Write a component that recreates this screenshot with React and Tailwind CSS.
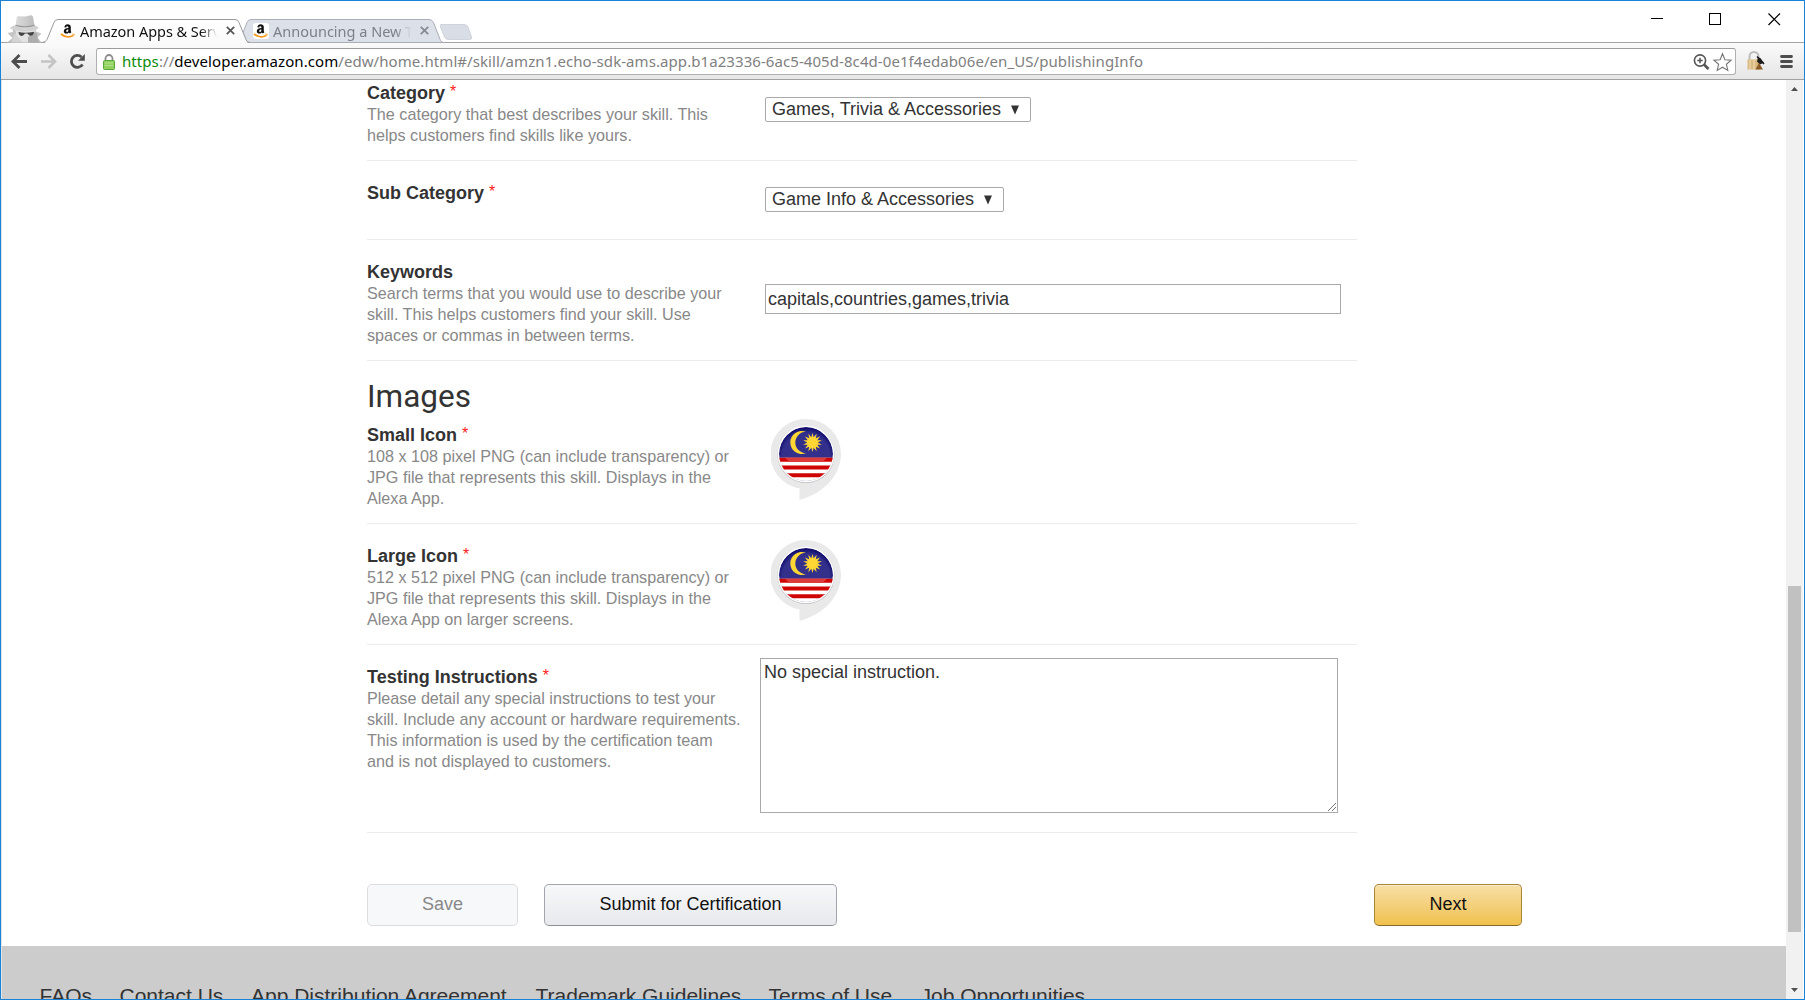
const CHROME = "font-['Noto_Sans','Open_Sans',sans-serif]";

function AmazonIcon() {
  return (
    <svg width="14" height="14" viewBox="0 0 14 14" className="shrink-0 overflow-visible">
      <path d="M3.300 3.200C3.700 1.300 5 .2 6.600.2c1.900 0 3.200.8 3.200 2.800v3.700c0 .7.3 1 .6 1.500L8.900 9.500c-.5-.4-.8-.7-1.100-1.100-.8.8-1.500 1.200-2.500 1.200C3.800 9.600 2.800 8.600 2.800 7.200c0-2.400 2.100-3.100 4.600-3.200 0-.9-.1-1.700-1-1.700-.7 0-1 .4-1.200 1.200zM7.400 5.500c-1.400 0-2.200.5-2.200 1.600 0 .6.3.9.8.9 1.100 0 1.400-1 1.400-2.500z" fill="#111" fillRule="evenodd" />
      <path d="M0 10C3.600 13.300 8.900 13.600 12.300 11.400" fill="none" stroke="#f7981d" strokeWidth="1.700" />
      <path d="M10.600 10c1-.4 2.600-.4 2.900 0 .2.500-.2 2-.9 2.700l.1-2z" fill="#f7981d" />
    </svg>
  );
}

function Close({ color }) {
  return (
    <svg width="9" height="9" viewBox="0 0 9 9" className="shrink-0">
      <path d="M.8.8l7.400 7.400M8.200.8L.8 8.200" stroke={color} strokeWidth="1.700" />
    </svg>
  );
}

function TitleBar() {
  return (
    <div className="relative h-[42px] shrink-0">
      <svg width="1803" height="42" viewBox="1 1 1803 42" className="absolute left-0 top-0">
        <defs>
          <linearGradient id="tab" x1="0" y1="0" x2="0" y2="1">
            <stop offset="0" stopColor="#fff" />
            <stop offset="1" stopColor="#fafafa" />
          </linearGradient>
          <linearGradient id="hat" x1="0" y1="0" x2="1" y2="0">
            <stop offset="0" stopColor="#dcdcdc" />
            <stop offset="1" stopColor="#bdbdbd" />
          </linearGradient>
        </defs>
        <path d="M1 42.500H1804" stroke="#a3a3a3" />
        <path d="M239 42.500l8-20q1.500-3 4-3h178q3 0 4.500 3l7 18q1 2 3 2z" fill="#dce0e9" stroke="#a9adb5" />
        <path d="M441 24.500h23q3 0 4 2.500l3.500 10q.8 2.500-2 2.500h-21q-3 0-4-2.500l-4-10q-1-2.500.5-2.500z" fill="#d8dde6" stroke="#cfd3da" />
        <path d="M42 43.500q4-.5 5-3l7-18q1-3 4-3h177q3 0 4 3l7 18q1 3 5 3z" fill="url(#tab)" />
        <path d="M42 42.500q4-.5 5-3l7-17q1-3 4-3h177q3 0 4 3l7 17q1 3 4 3" fill="none" stroke="#9a9a9a" />
        <path d="M7 42.500l5.500-4.500-5-5 5.500-1-.5-4h24l-.5 3.500 5.500 2-4 4 4 5z" fill="#c4c4c4" />
        <path d="M15.500 29.500h20l-1 7.500-6 5.500h-6l-6-5.500z" fill="#e3e3e3" />
        <path d="M28 37l7-5 1.500 1 1 4.500 1.500 5H28z" fill="#adadad" />
        <path d="M14.500 33l8 9.500h-11z" fill="#d4d4d4" />
        <path d="M18.500 32q7 1.600 15.500-.3 0 2-1.200 3.300-3 2-5.300-1.500h-2.500q-2.500 4-5.500 1.500-1-1-1-3z" fill="#454545" />
        <path d="M15.500 26l1.200-8.500q.3-1.500 2-1.300l6.800.4 5-1.300q2-.3 2.500 1.500l1.500 9q-9 3.500-19 .2z" fill="url(#hat)" />
        <path d="M10 28.500q1-2.600 5.500-3 9.500 2.800 19 0 3.500.5 4.500 2.500-6 3.500-14.500 3.500-9 0-14.500-3z" fill="#d2d2d2" />
        <path d="M15.500 25.200q9.500 3 19.200 0" stroke="#959595" strokeWidth="1.100" fill="none" />
      </svg>
      <div className={`relative flex h-full items-center pl-[60px] pt-[17px] text-[14.500px] leading-5 ${CHROME}`}>
        <div className="flex h-5 w-[190px] items-center">
          <AmazonIcon />
          <div className="ml-[5px] w-[137px] overflow-hidden whitespace-nowrap tracking-[-0.050px] text-[#111] [mask-image:linear-gradient(90deg,#000_88%,transparent)]">Amazon Apps &amp; Services</div>
          <span className="ml-[9px]"><Close color="#555" /></span>
        </div>
        <div className="flex h-5 w-[190px] items-center">
          <span className="ml-[2px] flex h-[16px] w-[16px] items-center justify-center rounded-[3px] bg-white"><AmazonIcon /></span>
          <div className="ml-[4px] w-[139px] overflow-hidden whitespace-nowrap text-[#7d8087] [mask-image:linear-gradient(90deg,#000_88%,transparent)]">Announcing a New Tool</div>
          <span className="ml-[8px]"><Close color="#85888e" /></span>
        </div>
      </div>
      <svg width="134" height="14" viewBox="0 0 134 14" className="absolute right-[21px] top-[11px]" shapeRendering="crispEdges">
        <path d="M2 6.500h12" stroke="#000" />
        <path d="M60.500 1.500h11v11h-11z" stroke="#000" fill="none" />
        <path d="M119.500 1.500l11.500 11.500M131 1.500L119.500 13" stroke="#000" strokeWidth="1.200" shapeRendering="geometricPrecision" />
      </svg>
    </div>
  );
}

function Toolbar() {
  return (
    <div className="flex h-[37px] shrink-0 items-start border-b border-[#a0a0a0] bg-gradient-to-b from-[#fafafa] to-[#e6e6e6] pt-[5px]">
      <svg width="86" height="26" viewBox="0 0 86 26" className="mr-[9px] shrink-0" fill="none">
        <path d="M26 13.500H12.500M18.500 7l-6.500 6.500 6.500 6.500" stroke="#4d4d4d" strokeWidth="2.800" />
        <path d="M40 13.500H53.500M47.500 7l6.500 6.500-6.500 6.500" stroke="#c4c4c4" strokeWidth="2.600" />
        <path d="M81.500 16.500a6 6 0 1 1-1-7.500" stroke="#4d4d4d" strokeWidth="2.800" />
        <path d="M83.800 6v6.800h-6.800z" fill="#4d4d4d" />
      </svg>
      <div className="flex h-[27px] w-[1640px] shrink-0 items-center rounded-[3px] border border-[#b0b0b0] border-t-[#9c9c9c] bg-white pl-[6px]">
        <svg width="12" height="16" viewBox="0 0 12 16" className="mr-[7px] shrink-0">
          <path d="M2.500 8V4.500a3.500 3.500 0 0 1 7 0V8" fill="none" stroke="#8c8c8c" strokeWidth="1.800" />
          <rect x=".5" y="6.500" width="11" height="9" rx="1" fill="#8fd05f" stroke="#59a638" />
          <path d="M2 9h8M2 11.500h8" stroke="#b4e38f" />
        </svg>
        <div className={`-mt-[2px] w-[1568px] whitespace-nowrap text-[15px] leading-6 tracking-[0.073px] text-[#808080] ${CHROME}`}>
          <span className="text-[#0b8a0b]">https</span>://<span className="text-black">developer.amazon.com</span>/edw/home.html#/skill/amzn1.echo-sdk-ams.app.b1a23336-6ac5-405d-8c4d-0e1f4edab06e/en_US/publishingInfo
        </div>
        <svg width="42" height="20" viewBox="0 0 42 20" className="ml-px shrink-0" fill="none">
          <circle cx="9" cy="8.500" r="5.600" stroke="#555" strokeWidth="1.600" />
          <path d="M13 12.500l4.500 4.500" stroke="#555" strokeWidth="2.600" />
          <path d="M6.300 8.500h5.400M9 5.800v5.400" stroke="#555" strokeWidth="1.500" />
          <path d="M31.500 1.700l2.400 6 6.200.5-4.700 4.100 1.400 6.100-5.300-3.200-5.300 3.200 1.400-6.100-4.700-4.100 6.200-.5z" stroke="#757575" strokeWidth="1.100" />
        </svg>
      </div>
      <svg width="50" height="26" viewBox="0 0 50 26" className="ml-[10px] shrink-0">
        <path d="M3.500 13V8.500a4.500 4.500 0 0 1 9 0V13" fill="none" stroke="#bcbcbc" strokeWidth="2" />
        <rect x="1.500" y="11.500" width="12" height="10" fill="#d9b980" />
        <path d="M4 11.500v10M8 11.500v10" stroke="#e9d3a6" strokeWidth="1.500" />
        <path d="M12 9.500q3 0 4 3l2 2-4 2-3-3z" fill="#1c1c1c" />
        <path d="M11 8.500l7 7.500" stroke="#1c1c1c" strokeWidth="1.500" />
        <path d="M13 15l-3.500 6.500h7.500z" fill="#8a5a24" />
        <path d="M35.500 8.500h10M35.500 13.500h10M35.500 18.500h10" stroke="#4d4d4d" strokeWidth="2.800" strokeLinecap="round" />
      </svg>
    </div>
  );
}

const RAYS = Array.from({ length: 28 }, (_, i) => {
  const a = (i * Math.PI) / 14 - Math.PI / 2;
  const r = i % 2 ? 5.3 : 9.6;
  return `${(41.5 + r * Math.cos(a)).toFixed(2)},${(23.5 + r * Math.sin(a)).toFixed(2)}`;
}).join(" ");

function SkillIcon({ id }) {
  return (
    <svg width="70" height="82" viewBox="0 0 70 82" className="shrink-0">
      <defs>
        <clipPath id={`${id}-clip`}><circle cx="35" cy="35" r="27" /></clipPath>
        <radialGradient id={`${id}-blue`} cx=".5" cy=".55" r=".55">
          <stop offset=".8" stopColor="#33308c" />
          <stop offset="1" stopColor="#0b0666" />
        </radialGradient>
      </defs>
      <path d="M35 0a35 35 0 0 1 35 35C70 50 60 72 28.500 81V69.500A35 35 0 0 1 35 0z" fill="#e9e9e9" />
      <circle cx="35" cy="35.500" r="28.500" fill="#b9b9b9" />
      <circle cx="35" cy="35" r="28.300" fill="#fff" />
      <g clipPath={`url(#${id}-clip)`}>
        <circle cx="35" cy="35" r="27" fill={`url(#${id}-blue)`} />
        <path d="M8 38.700h54V70H8z" fill="#fff" />
        <path d="M8 38.700h54v4H8zM8 46.500h54v4H8zM8 54.300h54v4H8z" fill="#cf0404" />
        <path d="M14 38.700h42q-2 2.500-5 4H19q-3-1.500-5-4z" fill="#dd3b3b" />
      </g>
      <path d="M35 12.800A11.500 11.500 0 1 0 35 34.200A10.700 10.700 0 1 1 35 12.800z" fill="#ffd633" />
      <polygon points={RAYS} fill="#ffd633" />
    </svg>
  );
}

function Label({ title, required, children }) {
  return (
    <div className="w-[398px] shrink-0">
      <div className="flex h-[23px] text-[18px] font-bold leading-[23px] text-[#333]">
        {title}
        {required && <span className="-mt-[2px] ml-[5px] text-[16px] font-normal text-[#ff1a1a]">*</span>}
      </div>
      <div className="-mt-px whitespace-nowrap text-[16.170px] leading-[21px] text-[#888]">{children}</div>
    </div>
  );
}

function Select({ children, className }) {
  return (
    <div className={`flex h-[25px] items-center justify-between rounded-[2px] border border-[#a9a9a9] pl-[6px] pr-[10px] text-[18px] leading-[22px] text-[#333] ${className}`}>
      <span className="-mt-[2px] whitespace-nowrap">{children}</span>
      <svg width="10" height="10" viewBox="0 0 10 10"><path d="M1 .5h8L5 9.500z" fill="#333" /></svg>
    </div>
  );
}

const ROW = "flex items-start border-b border-[#ececec]";

export default function App() {
  return (
    <div className="flex h-[1000px] w-[1805px] flex-col overflow-hidden border border-[#1883d7] bg-white font-['Liberation_Sans',Arial,sans-serif]">
      <TitleBar />
      <Toolbar />
      <div className="flex min-h-0 grow">
        <main className="flex w-[1785px] shrink-0 flex-col border-l border-[#e4e4e4]">
          <div className="ml-[365px] w-[990px]">
            <section className={`${ROW} h-[81px] pt-[2px]`}>
              <Label title="Category" required>The category that best describes your skill. This<br />helps customers find skills like yours.</Label>
              <Select className="mt-[15px] w-[266px]">Games, Trivia &amp; Accessories</Select>
            </section>
            <section className={`${ROW} h-[79px] pt-[21px]`}>
              <Label title="Sub Category" required />
              <Select className="mt-[5px] w-[239px]">Game Info &amp; Accessories</Select>
            </section>
            <section className={`${ROW} h-[121px] pt-[21px]`}>
              <Label title="Keywords">Search terms that you would use to describe your<br />skill. This helps customers find your skill. Use<br />spaces or commas in between terms.</Label>
              <div className="mt-[23px] h-[30px] w-[576px] border border-[#a9a9a9] pl-[2px] text-[18px] leading-[28px] text-[#333]">capitals,countries,games,trivia</div>
            </section>
            <section className="h-[163px] border-b border-[#ececec] pt-[14px]">
              <h2 className="h-[44px] font-['Roboto',sans-serif] text-[31.500px] font-normal leading-[43px] text-[#333]">Images</h2>
              <div className="flex items-start pt-[5px]">
                <Label title="Small Icon" required>108 x 108 pixel PNG (can include transparency) or<br />JPG file that represents this skill. Displays in the<br />Alexa App.</Label>
                <div className="-mt-[5px] ml-[6px]"><SkillIcon id="small" /></div>
              </div>
            </section>
            <section className={`${ROW} h-[121px] pt-[21px]`}>
              <Label title="Large Icon" required>512 x 512 pixel PNG (can include transparency) or<br />JPG file that represents this skill. Displays in the<br />Alexa App on larger screens.</Label>
              <div className="-mt-[5px] ml-[6px]"><SkillIcon id="large" /></div>
            </section>
            <section className={`${ROW} h-[188px] pt-[13px]`}>
              <div className="-mr-[5px] pt-[8px]">
                <Label title="Testing Instructions" required>Please detail any special instructions to test your<br />skill. Include any account or hardware requirements.<br />This information is used by the certification team<br />and is not displayed to customers.</Label>
              </div>
              <div className="flex h-[155px] w-[578px] items-end justify-between border border-[#a9a9a9] pl-[3px] text-[18px] text-[#333]">
                <span className="self-start pt-[2px] leading-[22px]">No special instruction.</span>
                <svg width="10" height="10" viewBox="0 0 10 10"><path d="M1 9L9 1M5 9l4-4" stroke="#777" /></svg>
              </div>
            </section>
          </div>
          <div className="ml-[365px] flex h-[113px] shrink-0 pt-[51px] text-center text-[18px] leading-[38px]">
            <div className="h-[42px] w-[151px] rounded-[5px] border border-[#dcdcde] bg-[#f7f8fa] text-[#888]">Save</div>
            <div className="ml-[26px] h-[42px] w-[293px] rounded-[5px] border border-[#a2a6ac] border-b-[#8d9096] bg-gradient-to-b from-[#f7f8fa] to-[#e7e9ec] text-[#111]">Submit for Certification</div>
            <div className="ml-[537px] h-[42px] w-[148px] rounded-[5px] border border-[#a88734] border-b-[#846a29] bg-gradient-to-b from-[#f7dfa5] to-[#f0c14b] text-[#111] shadow-[inset_0_1px_0_rgba(255,255,255,0.4)]">Next</div>
          </div>
          <footer className="flex min-h-0 grow overflow-hidden whitespace-nowrap bg-[#ccc] pl-[37.500px] pt-[38px] text-[21px] leading-[24px] text-[#333]">
            <span className="w-[80px] shrink-0">FAQs</span>
            <span className="w-[131.500px] shrink-0">Contact Us</span>
            <span className="w-[284.500px] shrink-0">App Distribution Agreement</span>
            <span className="w-[233px] shrink-0">Trademark Guidelines</span>
            <span className="w-[152px] shrink-0">Terms of Use</span>
            <span>Job Opportunities</span>
          </footer>
        </main>
        <div className="flex w-[17px] shrink-0 flex-col items-center bg-[#f1f1f1]">
          <svg width="17" height="17" className="shrink-0"><path d="M5 11h7L8.500 7z" fill="#505050" /></svg>
          <div className="mt-[489px] h-[346px] w-[13px] shrink-0 bg-[#c1c1c1]" />
          <svg width="17" height="17" className="mt-auto shrink-0"><path d="M5 6h7L8.500 10z" fill="#505050" /></svg>
        </div>
      </div>
    </div>
  );
}
